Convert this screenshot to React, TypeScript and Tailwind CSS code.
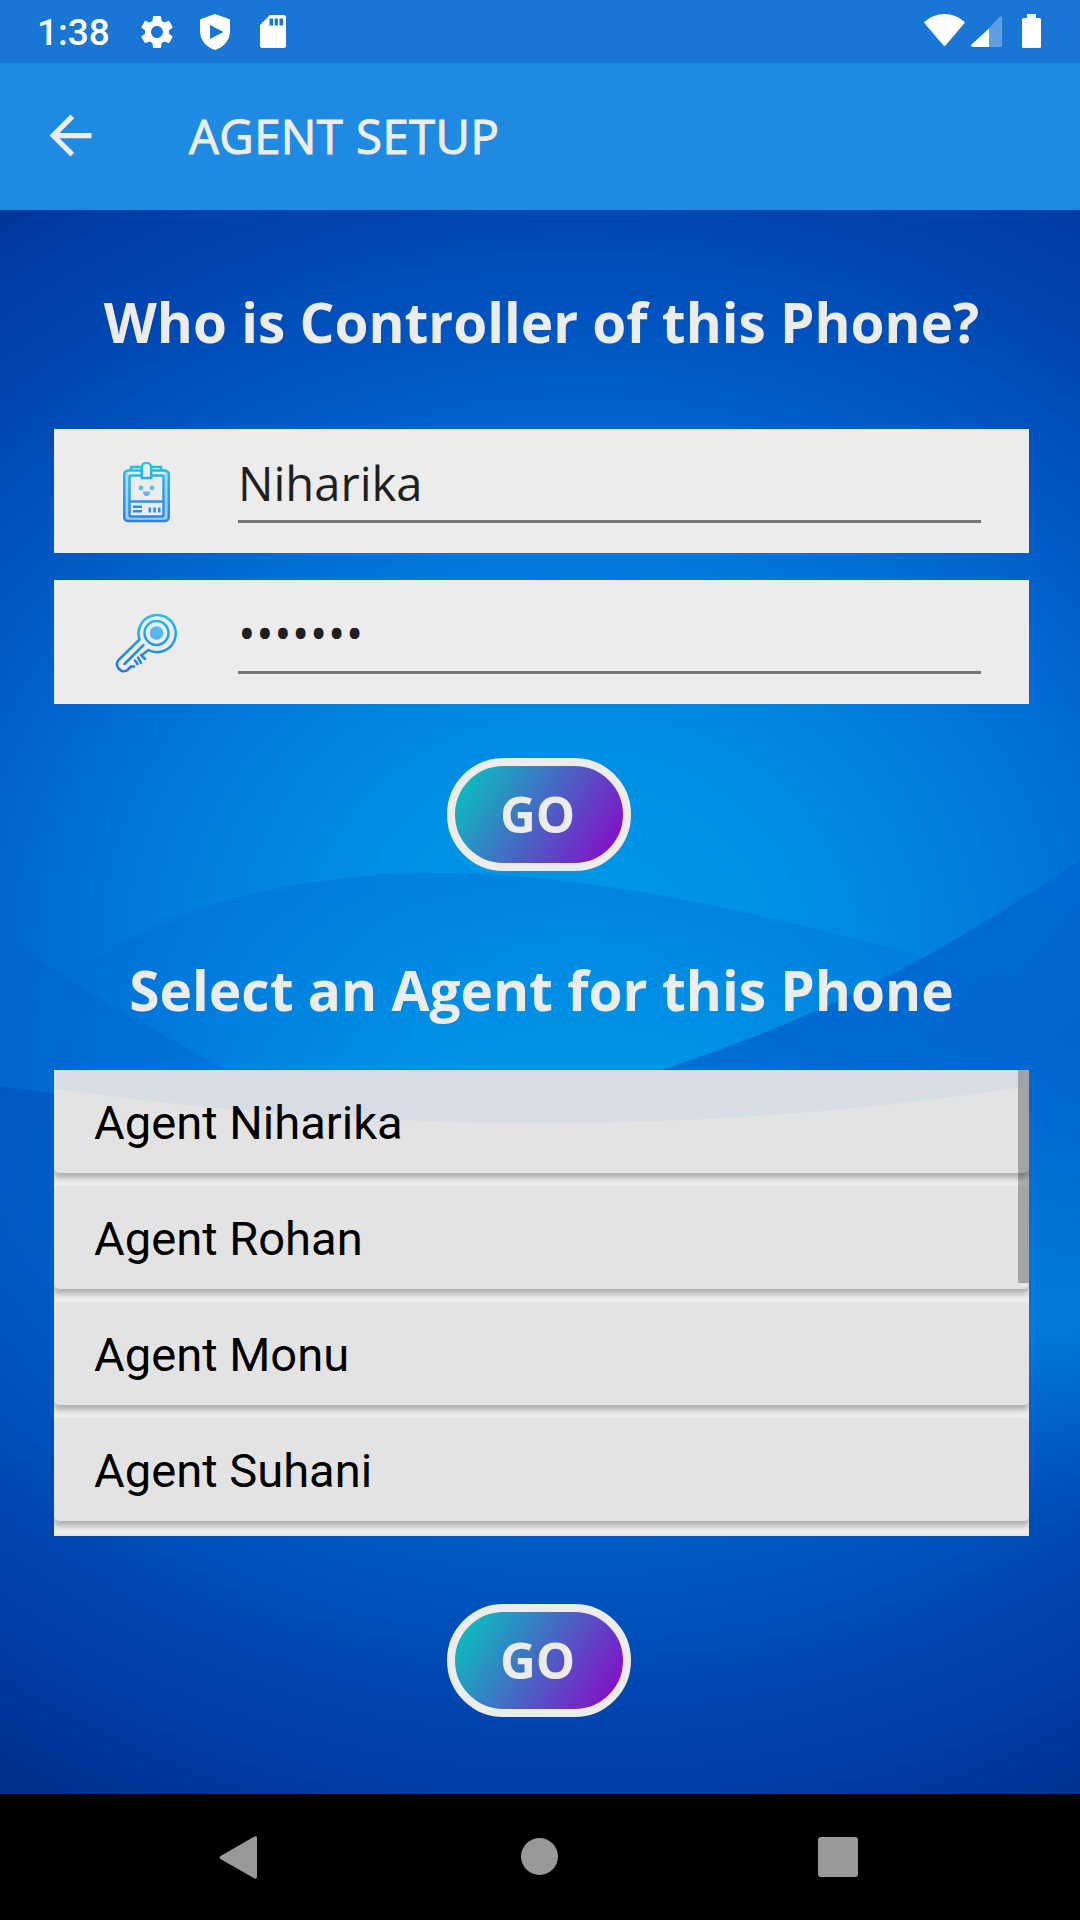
import type { ReactNode } from "react";

const agents = ["Agent Niharika", "Agent Rohan", "Agent Monu", "Agent Suhani"];

function StatusBar() {
  return (
    <header className="flex h-[63px] items-start bg-[#1976d5] text-white">
      <span className="ml-[37px] w-[73px] pt-[11px] font-['Roboto'] text-[37px] leading-[44px] font-medium whitespace-nowrap">1:38</span>
      <svg className="mt-[12px] ml-[27px] h-[40px] w-[40px]" viewBox="0 0 24 24" fill="currentColor">
        <path d="M19.14 12.94c.04-.3.06-.61.06-.94 0-.32-.02-.64-.07-.94l2.03-1.58a.49.49 0 0 0 .12-.61l-1.92-3.32a.488.488 0 0 0-.59-.22l-2.39.96c-.5-.38-1.03-.7-1.62-.94l-.36-2.54a.484.484 0 0 0-.48-.41h-3.84c-.24 0-.43.17-.47.41l-.36 2.54c-.59.24-1.13.57-1.62.94l-2.39-.96c-.22-.08-.47 0-.59.22L2.74 8.87c-.12.21-.08.47.12.61l2.03 1.58c-.05.3-.09.63-.09.94s.02.64.07.94l-2.03 1.58a.49.49 0 0 0-.12.61l1.92 3.32c.12.22.37.29.59.22l2.39-.96c.5.38 1.03.7 1.62.94l.36 2.54c.05.24.24.41.48.41h3.84c.24 0 .44-.17.47-.41l.36-2.54c.59-.24 1.13-.56 1.62-.94l2.39.96c.22.08.47 0 .59-.22l1.92-3.32c.12-.22.07-.47-.12-.61l-2.01-1.58zM12 15.6c-1.98 0-3.6-1.62-3.6-3.6s1.62-3.6 3.6-3.6 3.6 1.62 3.6 3.6-1.62 3.6-3.6 3.6z" />
      </svg>
      <svg className="mt-[14px] ml-[23px] h-[36px] w-[30px]" viewBox="0 0 30 36" fill="currentColor" fillRule="evenodd">
        <path d="M15 0 29 5Q30 5.400 30 6.500V17C30 26 23.500 33.500 15 36 6.500 33.500 0 26 0 17V6.500Q0 5.400 1 5ZM10 11V25L23.500 18Z" />
      </svg>
      <svg className="mt-[15px] ml-[30px] h-[33px] w-[26px]" viewBox="0 0 26 33" fill="currentColor" fillRule="evenodd">
        <path d="M10 0H23.500Q26 0 26 2.500V30.500Q26 33 23.500 33H2.500Q0 33 0 30.500V10ZM9.500 3.500V10.500H13V3.500ZM14.700 3.500V10.500H17.900V3.500ZM19.500 3.500V10.500H23V3.500Z" />
      </svg>
      <svg className="mt-[14px] mr-[6px] ml-auto h-[32px] w-[41px]" viewBox="0 0 41 32" fill="currentColor">
        <path d="M.6 7.800Q9 0 20.500 0T40.400 7.800Q41 8.500 40.400 9.200L21.700 31.200Q20.500 32.300 19.300 31.200L.6 9.200Q0 8.500.6 7.800Z" />
      </svg>
      <svg className="mt-[16px] h-[31px] w-[31px]" viewBox="0 0 31 31" fill="currentColor">
        <path d="M18 12.500V31H1.500Q-.8 30.500.5 28.500Z" />
        <path opacity=".3" d="M18 12.500 28.500.7Q31-.8 31 2V29.500Q31 31 29.500 31H18Z" />
      </svg>
      <svg className="mt-[14px] mr-[39px] ml-[20px] h-[34px] w-[19px]" viewBox="0 0 19 34" fill="currentColor">
        <path d="M5 0H14V4H17.500Q19 4 19 5.500V32.500Q19 34 17.500 34H1.500Q0 34 0 32.500V5.500Q0 4 1.500 4H5Z" />
      </svg>
    </header>
  );
}

function AppBar() {
  return (
    <div className="flex h-[147px] items-center bg-[#1f8ae1] text-[#ececec]">
      <svg className="ml-[39px] h-[63px] w-[63px] -translate-y-px" viewBox="0 0 24 24" fill="currentColor">
        <path d="M20 11H7.830l5.590-5.590L12 4l-8 8 8 8 1.410-1.410L7.830 13H20v-2z" />
      </svg>
      <h1 className="ml-[87px] -translate-y-px font-['Open_Sans'] text-[47.250px] leading-[64px] font-medium tracking-[0.45px] whitespace-nowrap [-webkit-text-stroke:1.1px_#ececec]">AGENT SETUP</h1>
    </div>
  );
}

function Backdrop() {
  return (
    <svg className="absolute inset-0 -z-10 h-full w-full" viewBox="0 210 1080 1584" preserveAspectRatio="none">
      <defs>
        <radialGradient id="base" gradientUnits="userSpaceOnUse" cx="0" cy="0" r="1" gradientTransform="translate(580 955) scale(1300 1150)">
          <stop offset="0" stopColor="#0098e8" />
          <stop offset=".14" stopColor="#0092e6" />
          <stop offset=".25" stopColor="#0086e2" />
          <stop offset=".36" stopColor="#0076da" />
          <stop offset=".46" stopColor="#0064ce" />
          <stop offset=".56" stopColor="#0053c0" />
          <stop offset=".66" stopColor="#0045af" />
          <stop offset=".73" stopColor="#003ea7" />
          <stop offset=".83" stopColor="#002f90" />
        </radialGradient>
        <linearGradient id="hill" gradientUnits="userSpaceOnUse" x1="0" y1="872" x2="0" y2="1070">
          <stop offset="0" stopColor="#0064d4" stopOpacity=".36" />
          <stop offset=".5" stopColor="#0064d4" stopOpacity=".2" />
          <stop offset="1" stopColor="#0064d4" stopOpacity="0" />
        </linearGradient>
        <linearGradient id="right" gradientUnits="userSpaceOnUse" x1="0" y1="860" x2="0" y2="1500">
          <stop offset="0" stopColor="#0066d4" stopOpacity=".75" />
          <stop offset=".28" stopColor="#0060cc" stopOpacity=".75" />
          <stop offset=".5" stopColor="#0070d4" stopOpacity=".8" />
          <stop offset=".72" stopColor="#0080da" stopOpacity=".85" />
          <stop offset="1" stopColor="#0070d4" stopOpacity="0" />
        </linearGradient>
        <linearGradient id="left" gradientUnits="userSpaceOnUse" x1="0" y1="935" x2="0" y2="1300">
          <stop offset="0" stopColor="#0064d2" stopOpacity=".6" />
          <stop offset=".45" stopColor="#0068d4" stopOpacity=".4" />
          <stop offset="1" stopColor="#0068d4" stopOpacity="0" />
        </linearGradient>
        <linearGradient id="lower" gradientUnits="userSpaceOnUse" x1="0" y1="1086" x2="0" y2="1450">
          <stop offset="0" stopColor="#0054c0" stopOpacity=".7" />
          <stop offset="1" stopColor="#0050be" stopOpacity="0" />
        </linearGradient>
      </defs>
      <rect y="210" width="1080" height="1584" fill="url(#base)" />
      <path fill="url(#right)" d="M1080 860Q1000 915 923 958Q800 1025 661 1070V1500H1080Z" />
      <path fill="url(#hill)" d="M0 1022Q40 994 69 975C190 890 330 873 448 873C600 875 770 915 923 957Q1000 978 1080 1002V1100H0Z" />
      <path fill="url(#left)" d="M0 935Q100 1002 227 1070V1300H0Z" />
      <path fill="url(#lower)" d="M0 1086Q30 1090 54 1094V1450H0Z" />
    </svg>
  );
}

function BadgeIcon() {
  return (
    <svg className="h-[61px] w-[47px]" viewBox="0 0 47 61" fill="none" stroke="url(#badge)" strokeWidth="2.500">
      <defs>
        <linearGradient id="badge" gradientUnits="userSpaceOnUse" x1="0" y1="0" x2="0" y2="61">
          <stop stopColor="#22c4ec" />
          <stop offset="1" stopColor="#2a80ee" />
        </linearGradient>
      </defs>
      <path strokeOpacity=".35" strokeWidth="4" d="M3.500 10V56.500H43.500V10" />
      <rect x="1.200" y="8.500" width="44.600" height="50.500" rx="4" />
      <rect x="6.500" y="13.500" width="34" height="41" rx="1.500" />
      <path d="M8 8V5H18M29 5H38V8M7 39.500H40" />
      <path fill="#ececec" d="M18.800 16V5.500a4.700 4.700 0 0 1 9.400 0V16Z" />
      <g stroke="none" fill="url(#badge)">
        <circle cx="18" cy="26" r="2.400" opacity=".7" />
        <circle cx="29" cy="26" r="2.400" opacity=".7" />
        <path opacity=".7" d="M20 29.500H27Q27 34 23.500 34T20 29.500Z" />
        <path d="M10 43.500h9v2.500h-9zM10 48h9v2.500h-9zM25.500 45.500h2.500v5h-2.500zM30.300 45.500h2.500v5h-2.500zM35 45.500h2.500v5h-2.500z" />
      </g>
    </svg>
  );
}

function KeyIcon() {
  return (
    <svg className="h-[60px] w-[62px]" viewBox="0 0 62 60" fill="none" stroke="url(#key)" strokeWidth="2.500" strokeLinecap="round">
      <defs>
        <linearGradient id="key" gradientUnits="userSpaceOnUse" x1="0" y1="0" x2="0" y2="60">
          <stop stopColor="#22c4ec" />
          <stop offset="1" stopColor="#2470e8" />
        </linearGradient>
      </defs>
      <path d="M24.500 26.500A18.600 18.600 0 1 1 33.500 37L27.500 41.500M24.500 26.500 3.500 47C-1 53 6 61.500 12.500 57L16 53.500" />
      <circle cx="41.500" cy="20" r="12" />
      <path d="M28.500 32 9.500 51M26 42 30 46M23 44.500 26 50M20 47.500 22.500 51M16 53.500H19" />
      <circle cx="41.500" cy="20" r="6.800" stroke="none" fill="url(#key)" opacity=".75" />
    </svg>
  );
}

function Field({ icon, children }: { icon: ReactNode; children: ReactNode }) {
  return (
    <div className="flex h-[124px] bg-[#ececec]">
      <div className="flex h-[126px] w-[184px] items-center justify-center">{icon}</div>
      <div className="h-[94px] w-[743px] border-b-[3px] border-[#757575] pt-[22px] font-['Open_Sans'] text-[47.100px] leading-[65px] text-[#1f1f1f]">
        {children}
      </div>
    </div>
  );
}

function GoButton() {
  return (
    <button className="mr-[5px] flex h-[113px] w-[184px] items-center justify-center self-center rounded-full border-8 border-[#ececec] bg-[linear-gradient(121.6deg,#00ccc0,#8f00c8)] pr-[3px] font-['Open_Sans'] text-[49.500px] leading-none font-bold text-[#ececec]">
      GO
    </button>
  );
}

function AgentList() {
  return (
    <div className="relative mt-[42px] h-[466px] overflow-hidden bg-[#ececec]">
      <ul className="flex flex-col gap-[13px]">
        {agents.map((name) => (
          <li key={name} className="flex h-[103px] items-center rounded-[5px] bg-[#e3e3e3] pt-[4px] pl-[40px] font-['Roboto'] text-[47.100px] text-black shadow-[0_5px_5px_rgba(0,0,0,0.25)]">
            {name}
          </li>
        ))}
        <li className="h-[103px] shrink-0 bg-[#e3e3e3]" />
      </ul>
      <div className="absolute top-0 right-0 h-[213px] w-[11px] bg-black/28" />
      <svg className="absolute top-0 left-0 h-[53px] w-full" viewBox="0 0 975 53" preserveAspectRatio="none">
        <path fill="rgb(101,151,255)" fillOpacity=".085" d="M0 0H975V16Q735 53 487 53T0 18.500Z" />
      </svg>
    </div>
  );
}

function NavBar() {
  return (
    <nav className="flex h-[126px] items-center bg-black text-[#999999]">
      <svg className="ml-[219px] h-[43px] w-[38px]" viewBox="0 0 38 43" fill="currentColor">
        <path d="M1.500 20 35.500.6Q38-.4 38 2V41Q38 43.400 35.500 42.400L1.500 23Q-.5 21.500 1.500 20Z" />
      </svg>
      <span className="ml-[264px] h-[37px] w-[37px] -translate-y-px rounded-full bg-current" />
      <span className="ml-[260px] h-10 w-10 rounded-[3px] bg-current" />
    </nav>
  );
}

export default function App() {
  return (
    <div className="flex h-[1920px] w-[1080px] flex-col overflow-hidden">
      <StatusBar />
      <AppBar />
      <main className="relative isolate flex h-[1584px] flex-col pr-[51px] pl-[54px]">
        <Backdrop />
        <h2 className="mt-[74px] text-center font-['Open_Sans'] text-[54.900px] leading-[76px] font-bold whitespace-nowrap text-[#ececec]">Who is Controller of this Phone?</h2>
        <div className="mt-[69px] mb-[54px] flex flex-col gap-[27px]">
          <Field icon={<BadgeIcon />}>Niharika</Field>
          <Field icon={<KeyIcon />}>
            <span className="block -translate-y-px tracking-[0.25px]">•••••••</span>
          </Field>
        </div>
        <GoButton />
        <h2 className="mt-[81px] text-center font-['Open_Sans'] text-[55px] leading-[76px] font-bold whitespace-nowrap text-[#ececec]">Select an Agent for this Phone</h2>
        <AgentList />
        <div className="mt-[68px] flex flex-col">
          <GoButton />
        </div>
      </main>
      <NavBar />
    </div>
  );
}
